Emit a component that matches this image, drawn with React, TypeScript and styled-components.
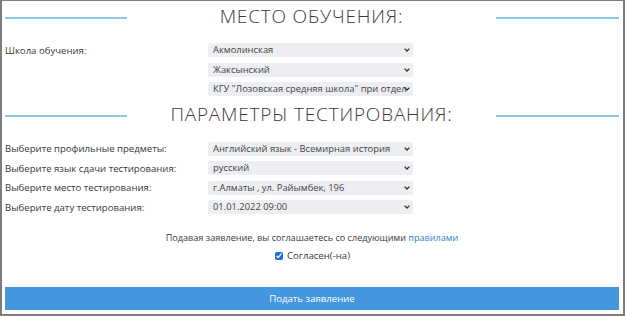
import React from "react";
import styled, { createGlobalStyle } from "styled-components";

const GlobalStyle = createGlobalStyle`
  html, body { margin: 0; padding: 0; background: #ffffff; }
  body { font-family: "Open Sans", "Noto Sans", sans-serif; }
  * { box-sizing: border-box; }
`;

const Frame = styled.div`
  width: 625px;
  height: 316px;
  border: 2px solid #7c7c7c;
  border-top-width: 1px;
  padding: 1px 4px 4px 3px;
  display: flex;
  flex-direction: column;
  color: #383838;
  font-size: 9.6px;
`;

const SectionHeader = styled.div<{ $mt: number }>`
  display: flex;
  align-items: center;
  height: 30px;
  margin-top: ${(p) => p.$mt}px;
`;

const Rule = styled.div<{ $w: number }>`
  width: ${(p) => p.$w}px;
  height: 2.5px;
  background: #8fc7e6;
  flex: none;
`;

const Title = styled.h2`
  flex: 1;
  margin: 0;
  padding-bottom: 3px;
  text-align: center;
  font-family: "Open Sans", sans-serif;
  font-weight: 300;
  font-size: 19px;
  line-height: 26px;
  letter-spacing: 0.8px;
  color: #3a3a3a;
`;

const Rows = styled.div<{ $mt: number }>`
  display: grid;
  grid-template-columns: 203px 205px;
  row-gap: 5.5px;
  margin-top: ${(p) => p.$mt}px;
`;

const Label = styled.div`
  display: flex;
  align-items: center;
  height: 14px;
  white-space: nowrap;
`;

const SelectWrap = styled.div`
  position: relative;
  height: 14px;
`;

const Select = styled.select`
  appearance: none;
  -webkit-appearance: none;
  width: 100%;
  height: 14px;
  border: none;
  border-radius: 2px;
  background: #eceef2;
  color: #444;
  font-family: "Open Sans", sans-serif;
  font-size: 9.4px;
  line-height: 14px;
  padding: 0 6px 0 5px;
  outline: none;
`;

const Chevron = styled.svg`
  position: absolute;
  right: 3px;
  top: 5px;
  width: 6px;
  height: 4px;
  pointer-events: none;
`;

const Consent = styled.p`
  margin: 16.5px 0 0;
  text-align: center;
  font-size: 9.1px;
  line-height: 14px;
`;

const Rules = styled.a`
  color: #2f7fd0;
  text-decoration: none;
`;

const AgreeRow = styled.label`
  display: flex;
  align-items: center;
  justify-content: center;
  gap: 4px;
  height: 14px;
  margin-top: 4px;
  padding-left: 1px;
`;

const Check = styled.input`
  width: 8px;
  height: 8px;
  margin: 0;
  accent-color: #1a6fd6;
`;

const Submit = styled.button`
  margin-top: 24.5px;
  height: 23px;
  width: 100%;
  border: none;
  background: #4497de;
  color: #ffffff;
  font-family: "Open Sans", sans-serif;
  font-size: 9.6px;
  cursor: pointer;
`;

const Dropdown = ({ value }: { value: string }) => (
  <SelectWrap>
    <Select defaultValue={value}>
      <option>{value}</option>
    </Select>
    <Chevron viewBox="0 0 6 4">
      <path d="M0.6 0.6 L3 3 L5.4 0.6" fill="none" stroke="#333" strokeWidth="1.3" />
    </Chevron>
  </SelectWrap>
);

export default function App() {
  return (
    <>
      <GlobalStyle />
      <Frame>
        <SectionHeader $mt={1}>
          <Rule $w={122} />
          <Title>МЕСТО ОБУЧЕНИЯ:</Title>
          <Rule $w={123} />
        </SectionHeader>
        <Rows $mt={10.5}>
          <Label>Школа обучения:</Label>
          <Dropdown value="Акмолинская" />
          <Label />
          <Dropdown value="Жаксынский" />
          <Label />
          <Dropdown value={'КГУ "Лозовская средняя школа" при отделе образования'} />
        </Rows>
        <SectionHeader $mt={4.5}>
          <Rule $w={122} />
          <Title>ПАРАМЕТРЫ ТЕСТИРОВАНИЯ:</Title>
          <Rule $w={123} />
        </SectionHeader>
        <Rows $mt={11}>
          <Label>Выберите профильные предметы:</Label>
          <Dropdown value="Английский язык - Всемирная история" />
          <Label>Выберите язык сдачи тестирования:</Label>
          <Dropdown value="русский" />
          <Label>Выберите место тестирования:</Label>
          <Dropdown value="г.Алматы , ул. Райымбек, 196" />
          <Label>Выберите дату тестирования:</Label>
          <Dropdown value="01.01.2022 09:00" />
        </Rows>
        <Consent>
          Подавая заявление, вы соглашаетесь со следующими <Rules href="#">правилами</Rules>
        </Consent>
        <AgreeRow>
          <Check type="checkbox" defaultChecked />
          Согласен(-на)
        </AgreeRow>
        <Submit type="button">Подать заявление</Submit>
      </Frame>
    </>
  );
}
